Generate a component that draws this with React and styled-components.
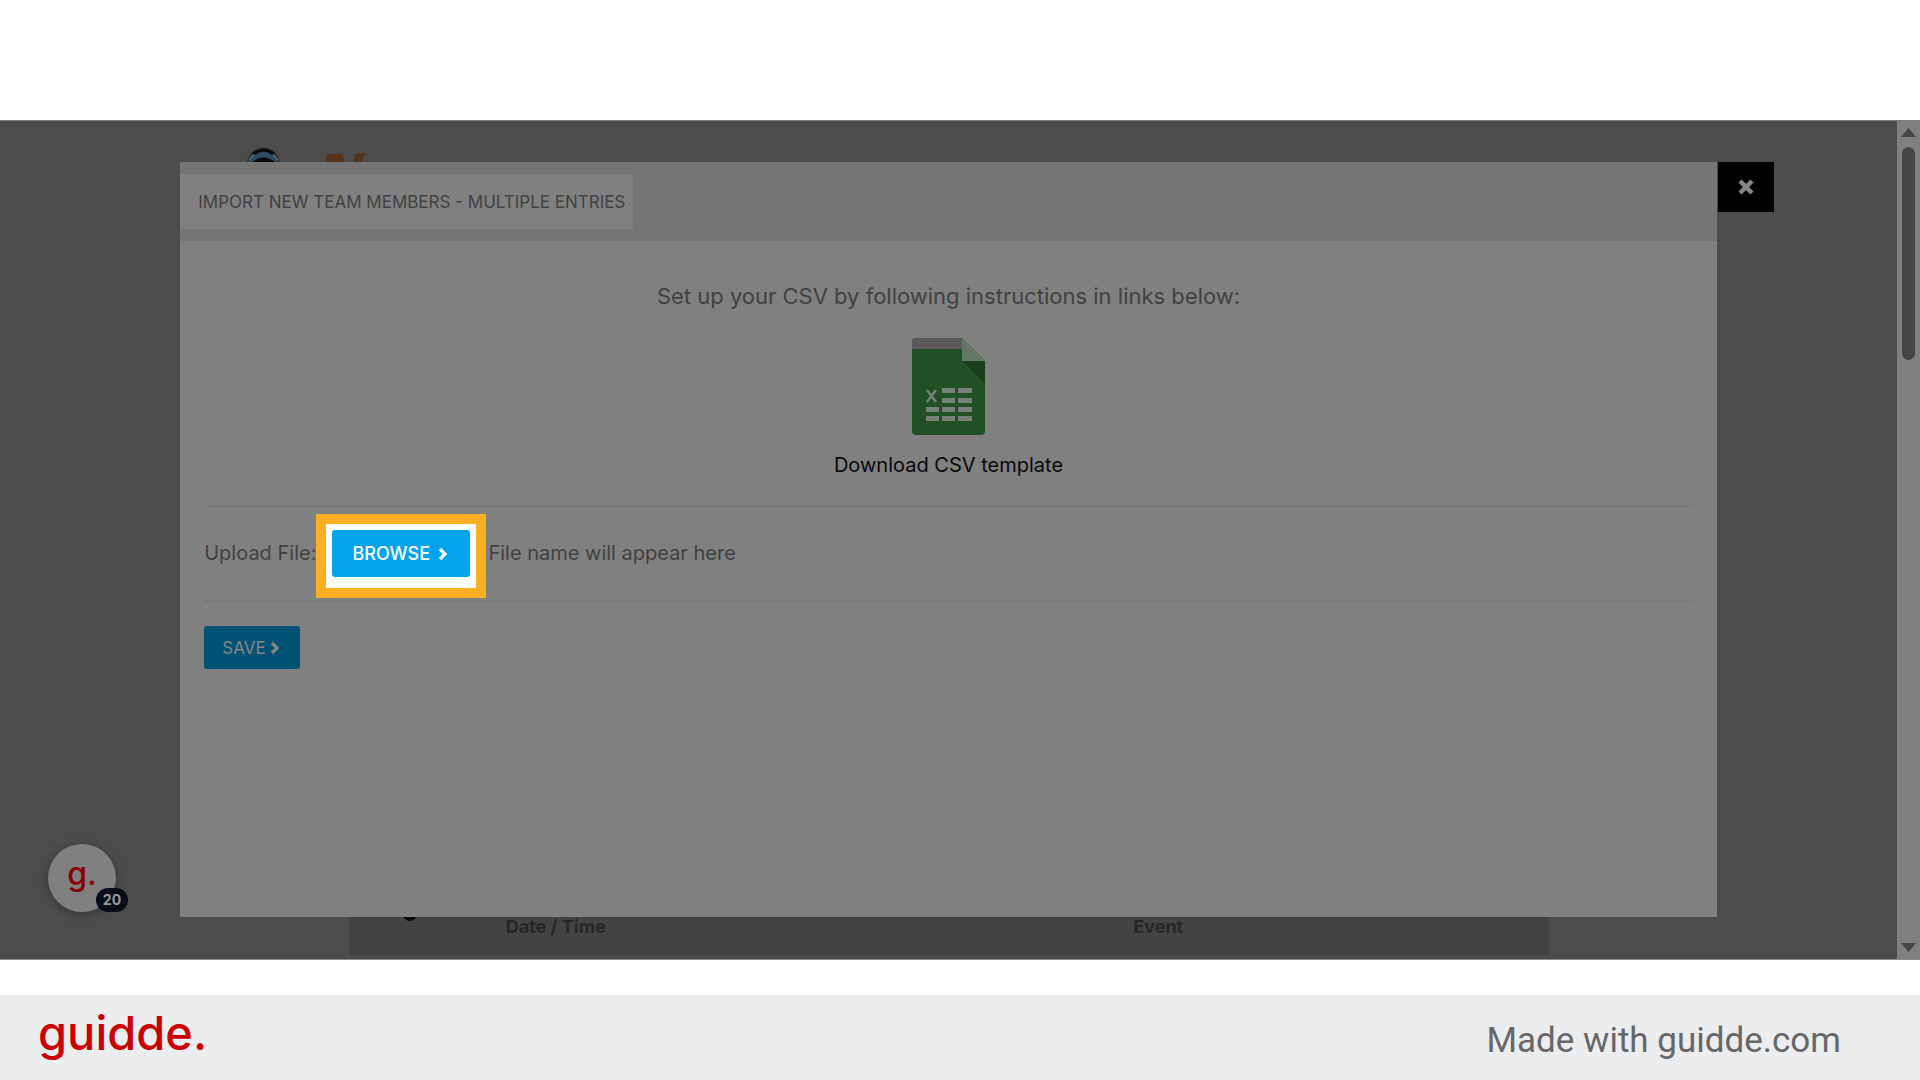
import React from "react";
import styled, { createGlobalStyle, css } from "styled-components";

const GlobalStyle = createGlobalStyle`
  *, *::before, *::after { box-sizing: border-box; }
  body { margin: 0; background: #fff; font-family: Inter, "Open Sans", sans-serif; }
  button { font: inherit; border: 0; padding: 0; cursor: pointer; }
  a { color: inherit; text-decoration: none; }
  p, h1 { margin: 0; font-weight: 400; }
`;

const Page = styled.div`
  display: grid;
  grid-template-rows: 120px minmax(840px, 1fr) 35px 85px;
  min-height: 100vh;
`;

const Stage = styled.main`
  grid-row: 2;
  display: flex;
  background: #4c4c4c;
  border-top: 1px solid #7c7c7c;
  border-bottom: 1px solid #8c8c8c;
`;

const Viewport = styled.div`
  position: relative;
  flex: 1;
  display: flex;
  flex-direction: column;
  justify-content: space-between;
`;

const SiteHeader = styled.div`
  display: flex;
  padding: 26px 0 0 246px;
`;

const Ledger = styled.table`
  width: 1200px;
  max-width: 64%;
  margin: 0 auto;
  table-layout: fixed;
  border-collapse: collapse;
  border-bottom: 4px solid #4a4a4a;
  background: #434343;
  color: #262626;
  font-size: 18px;
  line-height: 24px;
`;

const LedgerHead = styled.th`
  width: ${(p) => p.$width || "auto"};
  height: 50px;
  padding: 0 0 8px;
  text-align: left;
  vertical-align: middle;
  font-weight: 700;
`;

const LedgerIcon = styled(LedgerHead)`
  padding: 0 0 0 54px;
  vertical-align: top;
  line-height: 0;
`;

const Overlay = styled.div`
  position: absolute;
  inset: 41px 0 42px;
  display: flex;
  justify-content: center;
`;

const Modal = styled.section`
  position: relative;
  display: flex;
  flex-direction: column;
  width: 81%;
  background: #808080;
  color: #424242;
`;

const ModalHeader = styled.header`
  display: flex;
  padding: 12px 0;
  background: #757575;
`;

const ModalTitle = styled.h1`
  padding: 2px 8px 0 18px;
  background: #808080;
  font-size: 17px;
  line-height: 53px;
`;

const Close = styled.button`
  position: absolute;
  top: 0;
  left: calc(100% + 1px);
  display: grid;
  place-items: center;
  width: 56px;
  height: 50px;
  background: #000;
`;

const ModalBody = styled.div`
  padding: 37px 24px;
`;

const Template = styled.div`
  display: flex;
  flex-direction: column;
  align-items: center;
  padding-bottom: 24px;
  border-bottom: 2px solid #7a7a7a;
`;

const Lead = styled.p`
  font-size: 22px;
  line-height: 36px;
`;

const Download = styled.a`
  display: flex;
  flex-direction: column;
  align-items: center;
  gap: 13px;
  margin-top: 24px;
  color: #080808;
  font-size: 20px;
  line-height: 32px;
`;

const UploadRow = styled.div`
  display: flex;
  align-items: flex-start;
  padding: 7px 0 2px;
  border-bottom: 2px solid #7a7a7a;
  font-size: 20px;
  line-height: 78px;
`;

const FileName = styled.span`
  padding-left: 2px;
`;

const Highlight = styled.div`
  display: flex;
  padding: 6px 6px 11px;
  border: 10px solid #fdb022;
  background: #fff;
`;

const Action = styled.button`
  display: flex;
  align-items: center;
  border-radius: 3px;
  ${(p) =>
    p.$bright
      ? css`
          gap: 8px;
          width: 138px;
          height: 47px;
          padding-left: 20px;
          background: #03a4ea;
          color: #fff;
          font-size: 18px;
          font-weight: 500;
          line-height: 24px;
        `
      : css`
          gap: 4px;
          width: 96px;
          height: 43px;
          margin-top: 24px;
          padding-left: 18px;
          background: #015275;
          color: #858585;
          font-size: 17px;
          line-height: 24px;
        `}
`;

const Bubble = styled.button`
  position: absolute;
  left: 48px;
  bottom: 47px;
  width: 68px;
  height: 68px;
  padding-bottom: 8px;
  border-radius: 50%;
  background: #808080;
  box-shadow: 0 2px 8px rgba(0, 0, 0, 0.3);
  color: #870307;
  font-size: 32px;
  font-weight: 500;
  line-height: 60px;
`;

const Count = styled.span`
  position: absolute;
  right: -12px;
  bottom: 0;
  width: 32px;
  border-radius: 12px;
  background: #080c16;
  color: #9a9a9a;
  font-size: 14px;
  font-weight: 700;
  line-height: 24px;
`;

const Scrollbar = styled.div`
  display: flex;
  flex-direction: column;
  align-items: center;
  width: 23px;
  padding: 7px 0;
  background: #808080;
`;

const Thumb = styled.div`
  width: 13px;
  height: 213px;
  margin: 10px 0 auto;
  border-radius: 7px;
  background: #454545;
`;

const Footer = styled.footer`
  grid-row: 4;
  display: flex;
  align-items: center;
  justify-content: space-between;
  padding: 0 79px 0 38px;
  background: #ecedef;
`;

const Brand = styled.a`
  padding-bottom: 10px;
  color: #cb0000;
  font-size: 47px;
  font-weight: 500;
  line-height: 56px;
`;

const Credit = styled.p`
  padding-top: 6px;
  color: #666769;
  font-family: Roboto, sans-serif;
  font-size: 35px;
  line-height: 44px;
`;

const Chevron = () => (
  <svg width="10" height="14" viewBox="0 0 10 14" fill="none" aria-hidden="true">
    <path d="M2 2l5 5-5 5" stroke="currentColor" strokeWidth="3.2" />
  </svg>
);

const Arrow = ({ down }) => (
  <svg width="15" height="9" viewBox="0 0 15 9" aria-hidden="true">
    <path d={down ? "M0 0h15L7.500 9z" : "M0 9h15L7.500 0z"} fill="#454545" />
  </svg>
);

const SiteLogo = () => (
  <svg width="120" height="15" viewBox="0 0 120 15" aria-hidden="true">
    <circle cx="17.500" cy="17" r="16.500" fill="#35332a" />
    <circle cx="17.500" cy="17" r="15" fill="#2d4c62" />
    <path d="M6 6Q17.500-3 29 6L26 8Q17.500 1 9 8z" fill="#090a0b" />
    <path d="M6 15Q17.500 6 29 15z" fill="#07080c" />
    <path d="M3 13l5-5M32 13l-5-5" stroke="#71808a" strokeWidth="1" />
    <path d="M81 7h15l3 8H79zM110 6h9l-3 9h-9z" fill="#55361d" />
  </svg>
);

const SheetIcon = () => (
  <svg width="73" height="98" viewBox="0 0 73 98" aria-hidden="true">
    <path d="M4 0h46l23 23v70q0 4-4 4H4q-4 0-4-4V4q0-4 4-4z" fill="#225025" />
    <path d="M4 0h46v11H0V4q0-4 4-4z" fill="#5a5a5a" />
    <path d="M50 0l23 23H50z" fill="#627865" />
    <path d="M50 23h23v23z" fill="#183e1a" />
    <path
      d="M30 50h13v5H30zM46 50h14v5H46zM30 60h13v5H30zM46 60h14v5H46zM14 69h13v5H14zM30 69h13v5H30zM46 69h14v5H46zM14 78h13v5H14zM30 78h13v5H30zM46 78h14v5H46z"
      fill="#768277"
    />
    <path d="M15 52l9 12M24 52l-9 12" stroke="#768277" strokeWidth="2.400" />
  </svg>
);

export default function App() {
  return (
    <Page>
      <GlobalStyle />
      <Stage>
        <Viewport>
          <SiteHeader>
            <SiteLogo />
          </SiteHeader>
          <Ledger>
            <thead>
              <tr>
                <LedgerIcon $width="13.1%" aria-label="Icon">
                  <svg width="14" height="14" viewBox="0 0 14 14" aria-hidden="true">
                    <circle cx="7" cy="7" r="7" fill="#0c0c0c" />
                  </svg>
                </LedgerIcon>
                <LedgerHead $width="52.3%">Date / Time</LedgerHead>
                <LedgerHead>Event</LedgerHead>
              </tr>
            </thead>
          </Ledger>
          <Overlay>
            <Modal>
              <ModalHeader>
                <ModalTitle>IMPORT NEW TEAM MEMBERS - MULTIPLE ENTRIES</ModalTitle>
              </ModalHeader>
              <Close aria-label="Close">
                <svg width="16" height="16" viewBox="0 0 16 16" aria-hidden="true">
                  <path d="M2 2l12 12M14 2L2 14" stroke="#858585" strokeWidth="4.500" />
                </svg>
              </Close>
              <ModalBody>
                <Template>
                  <Lead>Set up your CSV by following instructions in links below:</Lead>
                  <Download href="#template">
                    <SheetIcon />
                    Download CSV template
                  </Download>
                </Template>
                <UploadRow>
                  <label htmlFor="browse">Upload File:</label>
                  <Highlight>
                    <Action id="browse" $bright>
                      BROWSE <Chevron />
                    </Action>
                  </Highlight>
                  <FileName>File name will appear here</FileName>
                </UploadRow>
                <Action>
                  SAVE <Chevron />
                </Action>
              </ModalBody>
            </Modal>
          </Overlay>
          <Bubble>
            g.<Count>20</Count>
          </Bubble>
        </Viewport>
        <Scrollbar>
          <Arrow />
          <Thumb />
          <Arrow down />
        </Scrollbar>
      </Stage>
      <Footer>
        <Brand href="#guidde">guidde.</Brand>
        <Credit>Made with guidde.com</Credit>
      </Footer>
    </Page>
  );
}
